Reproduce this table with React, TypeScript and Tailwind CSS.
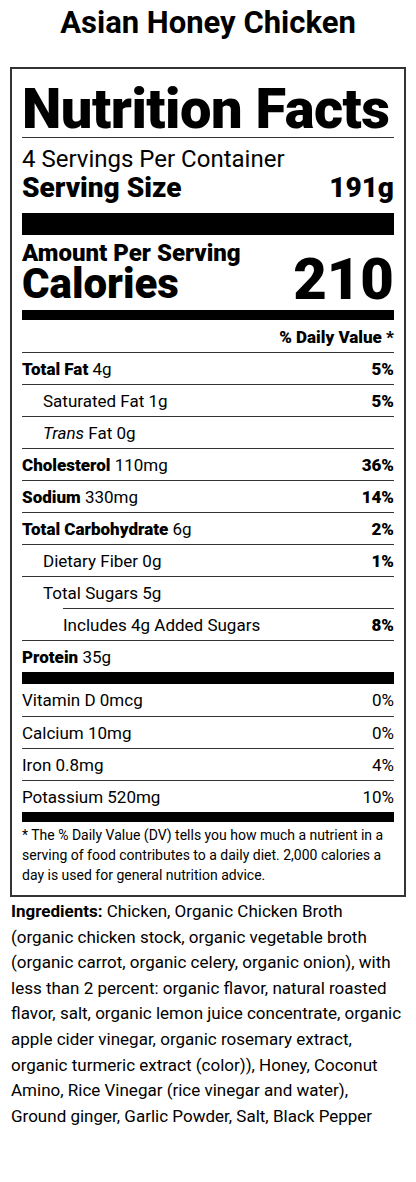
import React from "react";

type Row = {
  label: React.ReactNode;
  amount: string;
  dv?: string;
  indent?: 0 | 1 | 2;
  bold?: boolean;
};

const rows: Row[] = [
  { label: "Total Fat", amount: "4g", dv: "5%", bold: true },
  { label: "Saturated Fat", amount: "1g", dv: "5%", indent: 1 },
  { label: <><i>Trans</i> Fat</>, amount: "0g", indent: 1 },
  { label: "Cholesterol", amount: "110mg", dv: "36%", bold: true },
  { label: "Sodium", amount: "330mg", dv: "14%", bold: true },
  { label: "Total Carbohydrate", amount: "6g", dv: "2%", bold: true },
  { label: "Dietary Fiber", amount: "0g", dv: "1%", indent: 1 },
  { label: "Total Sugars", amount: "5g", indent: 1 },
  { label: "Includes 4g Added Sugars", amount: "", dv: "8%", indent: 2 },
  { label: "Protein", amount: "35g", bold: true },
];

const vitamins = [
  { label: "Vitamin D 0mcg", dv: "0%" },
  { label: "Calcium 10mg", dv: "0%" },
  { label: "Iron 0.8mg", dv: "4%" },
  { label: "Potassium 520mg", dv: "10%" },
];

const ingredientLines = [
  "(organic chicken stock, organic vegetable broth",
  "(organic carrot, organic celery, organic onion), with",
  "less than 2 percent: organic flavor, natural roasted",
  "flavor, salt, organic lemon juice concentrate, organic",
  "apple cider vinegar, organic rosemary extract,",
  "organic turmeric extract (color)), Honey, Coconut",
  "Amino, Rice Vinegar (rice vinegar and water),",
  "Ground ginger, Garlic Powder, Salt, Black Pepper",
];

function NutrientRow({ r }: { r: Row }) {
  const indentCls = r.indent === 1 ? "pl-[21px]" : "";
  const wrapCls = r.indent === 2 ? "ml-[41px]" : "";
  return (
    <div
      className={`${wrapCls} flex h-8 items-center justify-between border-t border-[#333] text-[17px] leading-[24px]`}
    >
      <span className={indentCls}>
        {r.bold ? <b className="font-black">{r.label}</b> : r.label}
        {r.amount ? <> {r.amount}</> : null}
      </span>
      {r.dv ? <span className="font-black">{r.dv}</span> : null}
    </div>
  );
}

export default function App() {
  return (
    <div className="w-[416px] bg-white text-black" style={{ fontFamily: "Roboto, 'Noto Sans', sans-serif" }}>
      <h1 className="pt-[3px] text-center text-[31px] font-bold leading-[40px]">Asian Honey Chicken</h1>

      <div className="mx-[10px] mt-[24px] border-2 border-[#333] px-[10px] pb-[10px]">
        <div className="border-b border-[#333] pt-3 text-[56px] font-black leading-[56px] tracking-[-0.5px]">
          Nutrition Facts
        </div>
        <div className="mt-[8px] text-[24px] leading-[26px]">4 Servings Per Container</div>
        <div className="flex justify-between pb-[9px] text-[28px] font-black leading-[32px]">
          <span>Serving Size</span>
          <span>191g</span>
        </div>
        <div className="h-[22px] bg-black" />

        <div className="mt-[5px] flex items-end justify-between">
          <div>
            <div className="text-[24px] font-black leading-[26px]">Amount Per Serving</div>
            <div className="text-[42px] font-black leading-[36px]">Calories</div>
          </div>
          <div className="text-[58px] font-black leading-[46px]">210</div>
        </div>
        <div className="mt-[8px] h-[10px] bg-black" />

        <div className="pb-[3px] pt-[5px] text-right text-[17px] font-black leading-[24px]">% Daily Value *</div>

        {rows.map((r, i) => (
          <NutrientRow key={i} r={r} />
        ))}
        <div className="h-[12px] bg-black" />

        {vitamins.map((v, i) => (
          <div
            key={v.label}
            className={`flex h-8 items-center justify-between text-[17px] leading-[24px] ${
              i > 0 ? "border-t border-[#333]" : ""
            }`}
          >
            <span>{v.label}</span>
            <span>{v.dv}</span>
          </div>
        ))}
        <div className="h-[10px] bg-black" />

        <p className="pt-[3px] text-[14px] leading-[20px]">
          * The % Daily Value (DV) tells you how much a nutrient in a serving of food contributes to a daily diet. 2,000
          calories a day is used for general nutrition advice.
        </p>
      </div>

      <p className="mt-[2px] whitespace-nowrap px-[11px] text-[17px] leading-[25.6px]">
        <b className="font-bold">Ingredients:</b> Chicken, Organic Chicken Broth
        {ingredientLines.map((l) => (
          <React.Fragment key={l}>
            <br />
            {l}
          </React.Fragment>
        ))}
      </p>
    </div>
  );
}
